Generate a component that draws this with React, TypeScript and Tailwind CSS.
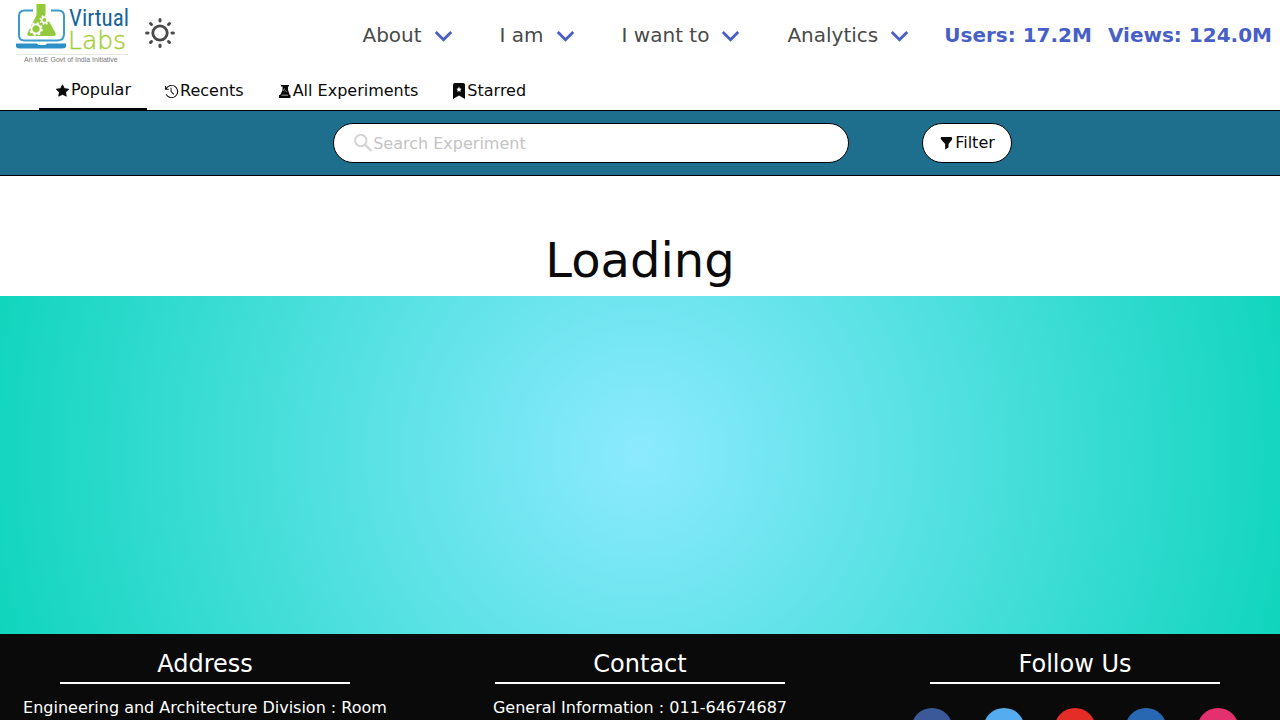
import React from "react";
import { FaFacebookF, FaTwitter, FaYoutube, FaLinkedinIn, FaInstagram } from "react-icons/fa";
import { BsStarFill } from "react-icons/bs";
import { VscHistory } from "react-icons/vsc";

function Gear({ x, y, r }: { x: number; y: number; r: number }) {
  const tooth = ((r + 1.4) * Math.PI) / 8;
  return (
    <g transform={`translate(${x} ${y})`} stroke="#fff" fill="none">
      <circle r={r} strokeWidth="1.8" />
      <circle r={r + 1.4} strokeWidth="1.7" strokeDasharray={`${tooth} ${tooth}`} />
    </g>
  );
}

function Logo() {
  return (
    <svg width="114" height="64" viewBox="0 0 114 64" role="img" aria-label="Virtual Labs">
      <path d="M17 6.500H8.500Q3 6.500 3 12V31Q3 36.500 8.500 36.500H41Q48 36.500 48 30V12Q48 6.500 42.500 6.500H35" fill="none" stroke="#3b9ccb" strokeWidth="2" />
      <path d="M0 39.500H21Q22 41 24 41H28Q30 41 31 39.500H50V42Q50 44.500 46 44.500H4Q0 44.500 0 42Z" fill="#2f90c8" />
      <path d="M20.500 0H29.500V11L39 28Q41 32 37.500 32H13.500Q10 32 12 28L20.500 11Z" fill="#95c93d" />
      <Gear x={20} y={25} r={4.6} />
      <Gear x={28.500} y={16} r={2.8} />
      <text x="53" y="22" fontSize="23" fill="#17649a" className="font-['Liberation_Sans_Narrow','Roboto_Condensed',sans-serif]">
        Virtual
      </text>
      <text x="52" y="45" fontSize="25" fill="#a5cd39" stroke="#a5cd39" strokeWidth="0.400" className="font-['DejaVu_Sans',sans-serif] font-extralight">
        Labs
      </text>
      <path d="M0 50.500H112" stroke="#e6e6e6" strokeWidth="1" />
      <text x="8" y="58" fontSize="7" fill="#777" className="font-['Liberation_Sans',sans-serif]">
        An McE Govt of India Initiative
      </text>
    </svg>
  );
}

function SunIcon() {
  return (
    <svg width="32" height="32" viewBox="0 0 32 32" fill="none" stroke="#4a4a4a" strokeLinecap="round" aria-hidden="true">
      <circle cx="16" cy="16" r="7.200" strokeWidth="2.800" />
      <g strokeWidth="3">
        <path d="M16 2.600V4M16 28V29.400M2.600 16H4M28 16H29.400M6.500 6.500L7.500 7.500M24.500 24.500L25.500 25.500M6.500 25.500L7.500 24.500M24.500 7.500L25.500 6.500" />
      </g>
    </svg>
  );
}

function FlaskIcon() {
  return (
    <svg width="15" height="15" viewBox="0 0 15 15" aria-hidden="true">
      <path d="M4 1H12V2.500H11V6L12.500 10V11H13.500V14H2V11H3L4 9.500L5.500 6V2.500H4Z" fill="#0a0a0a" />
      <path d="M7.500 4.500L6.500 7M8.500 6.500L9.500 8M4.500 11.200H11" stroke="#fff" strokeWidth="0.600" />
    </svg>
  );
}

function BookmarkIcon() {
  return (
    <svg width="15" height="16" viewBox="0 0 15 16" aria-hidden="true">
      <path d="M2 2Q2 0 4 0H12Q14 0 14 2V16L8 12.500L2 16Z" fill="#0a0a0a" />
      <path d="M8 3.500L8.800 5.500L10.500 5.700L9.300 7.200L9.700 9L8 8.100L6.300 9L6.700 7.200L5.500 5.700L7.200 5.500Z" fill="#fff" />
    </svg>
  );
}

function SearchIcon() {
  return (
    <svg width="20" height="20" viewBox="0 0 20 20" fill="none" stroke="#d4d4d4" strokeWidth="2" aria-hidden="true">
      <circle cx="7.800" cy="7.500" r="5.700" />
      <path d="M12 11.700L18.500 18" strokeWidth="2.400" />
    </svg>
  );
}

function FunnelIcon() {
  return (
    <svg width="14" height="14" viewBox="0 0 14 14" aria-hidden="true">
      <path d="M2.500 1H12Q13.500 1 13.200 2.700L12.800 4L9.500 8V11.500L6.200 13.500V8L2.500 4L1.700 2.500Q1.500 1 2.500 1Z" fill="#0a0a0a" />
    </svg>
  );
}

const menus = ["About", "I am", "I want to", "Analytics"];

const socials = [
  { name: "Facebook", Icon: FaFacebookF, color: "bg-[#3b5998]" },
  { name: "Twitter", Icon: FaTwitter, color: "bg-[#55acee]" },
  { name: "YouTube", Icon: FaYoutube, color: "bg-[#e52d27]" },
  { name: "LinkedIn", Icon: FaLinkedinIn, color: "bg-[#2867b2]" },
  { name: "Instagram", Icon: FaInstagram, color: "bg-[#e4306f]" },
];

function FooterColumn({ title, children }: { title: string; children: React.ReactNode }) {
  return (
    <section className="flex flex-col items-center">
      <h2 className="w-[290px] border-b-2 border-white pb-0.5 text-center text-2xl leading-8">{title}</h2>
      {children}
    </section>
  );
}

export default function App() {
  return (
    <div className="bg-white font-['DejaVu_Sans',sans-serif] text-base text-[#0a0a0a]">
      <header className="flex h-[72px] items-start justify-between pr-2 pl-4">
        <div className="flex items-center gap-3.5 pt-1">
          <a href="#home" className="block">
            <Logo />
          </a>
          <button type="button" aria-label="Toggle theme" className="mb-1.5">
            <SunIcon />
          </button>
        </div>
        <nav className="flex items-center pt-[21px] text-xl text-[#4a4a4a]">
          {menus.map((label) => (
            <button key={label} type="button" className="mr-[47px] flex items-center gap-3 last-of-type:mr-[35px]">
              {label}
              <svg width="19" height="12" viewBox="0 0 19 12" fill="none" stroke="#485fc7" strokeWidth="2.800" aria-hidden="true" className="mt-0.5">
                <path d="M1.800 2L9.500 9.700L17.200 2" />
              </svg>
            </button>
          ))}
          <div className="flex gap-4 font-bold text-[#485fc7]">
            <span>Users: 17.2M</span>
            <span>Views: 124.0M</span>
          </div>
        </nav>
      </header>

      <nav className="flex h-[38px] items-stretch gap-px pl-[39px]">
        <a href="#popular" className="flex items-center gap-px border-b-2 border-black px-4">
          <BsStarFill size={15} className="p-px" />
          Popular
        </a>
        <a href="#recents" className="flex items-center gap-px px-4">
          <VscHistory size={15} />
          Recents
        </a>
        <a href="#all" className="flex items-center gap-px px-4">
          <FlaskIcon />
          All Experiments
        </a>
        <a href="#starred" className="flex items-center gap-px px-4">
          <BookmarkIcon />
          Starred
        </a>
      </nav>

      <form className="flex items-center justify-center gap-[73px] border-y border-black bg-[#1e6e8e] py-3 pl-[65px]">
        <label className="flex h-10 w-[516px] items-center rounded-full border border-black bg-white pr-5 pl-[19px] text-[#c4c4c4]">
          <SearchIcon />
          <input type="text" aria-label="Search Experiment" placeholder="Search Experiment" className="min-w-0 flex-1 pt-0.5 outline-none placeholder:text-[#c4c4c4]" />
        </label>
        <button type="button" className="flex h-10 items-center gap-0.5 rounded-full border border-black bg-white px-4">
          <FunnelIcon />
          Filter
        </button>
      </form>

      <main>
        <h1 className="pt-12 text-center text-5xl leading-[72px]">Loading</h1>
        <div className="h-[338px] bg-[radial-gradient(circle_at_50%_157px,#8ceaff,#10d5bd)]" />
      </main>

      <footer className="grid grid-cols-3 gap-[71px] bg-[#0a0a0a] px-[23px] pt-3.5 pb-6 text-white">
        <FooterColumn title="Address">
          <p className="mt-3 text-center">Engineering and Architecture Division : Room</p>
        </FooterColumn>
        <FooterColumn title="Contact">
          <p className="mt-3 text-center">General Information : 011-64674687</p>
        </FooterColumn>
        <FooterColumn title="Follow Us">
          <div className="mt-6 flex w-9/10 justify-between">
            {socials.map(({ name, Icon, color }) => (
              <a key={name} href="#social" aria-label={name} className={`flex size-[42px] items-center justify-center rounded-full ${color}`}>
                <Icon size={16} />
              </a>
            ))}
          </div>
        </FooterColumn>
      </footer>
    </div>
  );
}
